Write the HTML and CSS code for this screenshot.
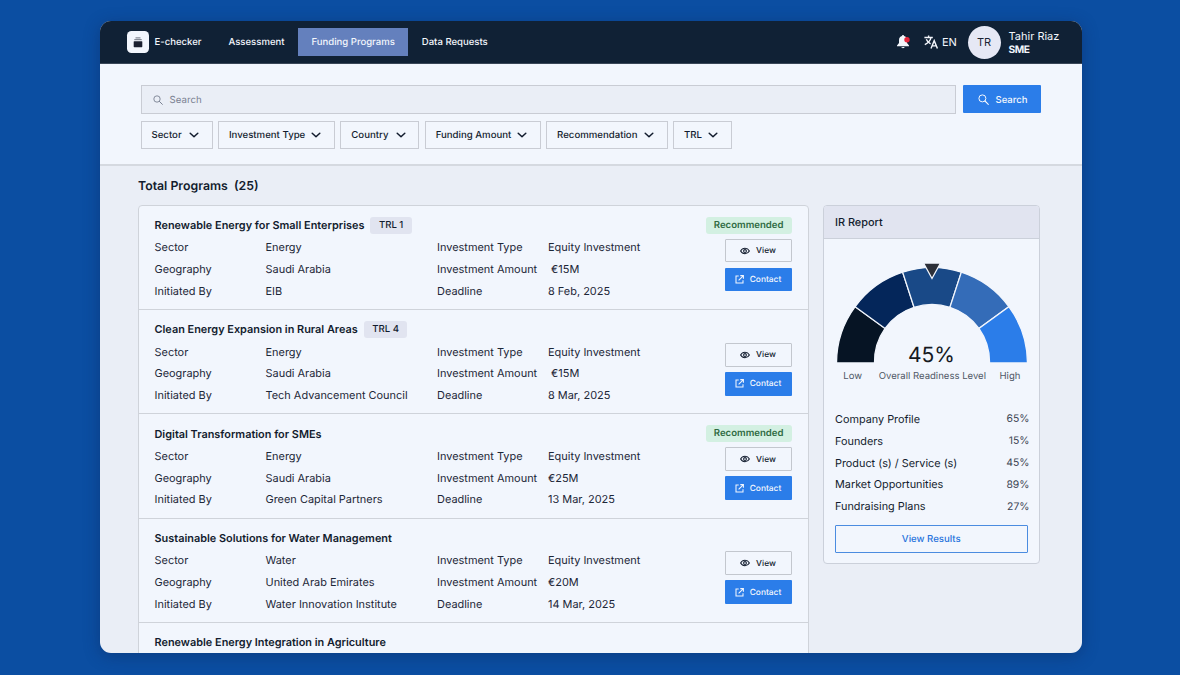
FILE: index.html
```
<!DOCTYPE html>
<html lang="en">
<head>
<meta charset="utf-8">
<title>E-checker – Funding Programs</title>
<link rel="stylesheet" href="styles.css">
</head>
<body>
<svg class="sprite" aria-hidden="true">
  <symbol id="chev" viewBox="0 0 10 6"><path d="M1.2 1.2 5 4.8 8.8 1.2" fill="none" stroke="currentColor" stroke-width="1.5" stroke-linecap="round" stroke-linejoin="round"/></symbol>
  <symbol id="mag" viewBox="0 0 11 11"><circle cx="4.4" cy="4.4" r="3.5" fill="none" stroke="currentColor"/><path d="M7 7l3.3 3.3" stroke="currentColor" stroke-width="1.1" stroke-linecap="round"/></symbol>
  <symbol id="eye" viewBox="0 0 10 8"><path d="M.6 4C2.6.4 7.4.4 9.4 4 7.4 7.6 2.6 7.6.6 4Z" fill="none" stroke="currentColor" stroke-width="1.05"/><circle cx="5" cy="4" r="1.4" fill="none" stroke="currentColor" stroke-width="1.05"/></symbol>
  <symbol id="ext" viewBox="0 0 9 9"><path d="M3.7 1H1v7h7V5.3M5.3.6h3.1v3.1M8.2.8 3.6 5.4" fill="none" stroke="currentColor" stroke-width="1.05"/></symbol>
</svg>
<div class="window">
  <header class="topbar">
    <div class="brand">
      <span class="logo"><svg width="10" height="11" viewBox="0 0 10 11"><path d="M2.500.9h5M1.300 2.700h7.400" stroke="#4a4f5e" stroke-width=".8"/><rect x=".7" y="4.200" width="8.600" height="6" rx=".6" fill="#1a2030"/></svg></span>
      <span>E-checker</span>
    </div>
    <nav class="nav">
      <a>Assessment</a><a class="active">Funding Programs</a><a>Data Requests</a>
    </nav>
    <div class="tools">
      <svg class="bell" width="14" height="14" viewBox="0 0 14 14"><path d="M6 0c.7 0 1 .5 1 1.1 2 .5 3 2 3 4v3L12 10.600V11.300H0V10.600L2 8.100v-3c0-2 1-3.500 3-4C5 .5 5.300 0 6 0Z" fill="#f3f6fc"/><path d="M4.400 12.100h3.200c-.3 1.600-2.900 1.600-3.200 0Z" fill="#f3f6fc"/><circle cx="10" cy="4.700" r="2.700" fill="#e5263c"/></svg>
      <svg class="lang" width="14" height="14" viewBox="0 0 14 14" fill="none" stroke="#f3f6fc" stroke-width="1.400"><path d="M.4 2.500h8.400M4.600.4v2M7 2.700C6.300 5.600 3.500 8.300.8 9.600M2.300 4.300C3 6.200 4.700 8 6.600 8.900M7 13.500 10.200 5.700 13.400 13.500M8.100 10.900h4.200"/></svg>
      <span class="en">EN</span>
      <span class="avatar">TR</span>
      <div class="user"><span>Tahir Riaz</span><b>SME</b></div>
    </div>
  </header>
  <section class="filters">
    <div class="searchrow">
      <div class="field"><svg width="10" height="10"><use href="#mag"/></svg><span>Search</span></div>
      <div class="searchbtn"><svg width="11" height="11"><use href="#mag"/></svg><span>Search</span></div>
    </div>
    <div class="chips">
      <div class="chip c1"><span>Sector</span><svg width="10" height="6"><use href="#chev"/></svg></div>
      <div class="chip c2"><span>Investment Type</span><svg width="10" height="6"><use href="#chev"/></svg></div>
      <div class="chip c3"><span>Country</span><svg width="10" height="6"><use href="#chev"/></svg></div>
      <div class="chip c4"><span>Funding Amount</span><svg width="10" height="6"><use href="#chev"/></svg></div>
      <div class="chip c5"><span>Recommendation</span><svg width="10" height="6"><use href="#chev"/></svg></div>
      <div class="chip c6"><span>TRL</span><svg width="10" height="6"><use href="#chev"/></svg></div>
    </div>
  </section>
  <main class="main">
    <h1>Total Programs&nbsp; (25)</h1>
    <div class="cols">
      <div class="list">
        <article class="item">
          <div class="info">
            <div class="title"><h2>Renewable Energy for Small Enterprises</h2><span class="trl">TRL 1</span></div>
            <div class="grid">
              <span>Sector</span><span>Energy</span><span>Investment Type</span><span>Equity Investment</span>
              <span>Geography</span><span>Saudi Arabia</span><span>Investment Amount</span><span class="inset">€15M</span>
              <span>Initiated By</span><span>EIB</span><span>Deadline</span><span>8 Feb, 2025</span>
            </div>
          </div>
          <div class="side"><span class="rec">Recommended</span><div class="btn"><svg width="10" height="8"><use href="#eye"/></svg><span>View</span></div><div class="btn blue"><svg width="9" height="9"><use href="#ext"/></svg><span>Contact</span></div></div>
        </article>
        <article class="item">
          <div class="info">
            <div class="title"><h2>Clean Energy Expansion in Rural Areas</h2><span class="trl">TRL 4</span></div>
            <div class="grid">
              <span>Sector</span><span>Energy</span><span>Investment Type</span><span>Equity Investment</span>
              <span>Geography</span><span>Saudi Arabia</span><span>Investment Amount</span><span class="inset">€15M</span>
              <span>Initiated By</span><span>Tech Advancement Council</span><span>Deadline</span><span>8 Mar, 2025</span>
            </div>
          </div>
          <div class="side"><div class="btn"><svg width="10" height="8"><use href="#eye"/></svg><span>View</span></div><div class="btn blue"><svg width="9" height="9"><use href="#ext"/></svg><span>Contact</span></div></div>
        </article>
        <article class="item">
          <div class="info">
            <div class="title"><h2>Digital Transformation for SMEs</h2></div>
            <div class="grid">
              <span>Sector</span><span>Energy</span><span>Investment Type</span><span>Equity Investment</span>
              <span>Geography</span><span>Saudi Arabia</span><span>Investment Amount</span><span>€25M</span>
              <span>Initiated By</span><span>Green Capital Partners</span><span>Deadline</span><span>13 Mar, 2025</span>
            </div>
          </div>
          <div class="side"><span class="rec">Recommended</span><div class="btn"><svg width="10" height="8"><use href="#eye"/></svg><span>View</span></div><div class="btn blue"><svg width="9" height="9"><use href="#ext"/></svg><span>Contact</span></div></div>
        </article>
        <article class="item">
          <div class="info">
            <div class="title"><h2>Sustainable Solutions for Water Management</h2></div>
            <div class="grid">
              <span>Sector</span><span>Water</span><span>Investment Type</span><span>Equity Investment</span>
              <span>Geography</span><span>United Arab Emirates</span><span>Investment Amount</span><span>€20M</span>
              <span>Initiated By</span><span>Water Innovation Institute</span><span>Deadline</span><span>14 Mar, 2025</span>
            </div>
          </div>
          <div class="side"><div class="btn"><svg width="10" height="8"><use href="#eye"/></svg><span>View</span></div><div class="btn blue"><svg width="9" height="9"><use href="#ext"/></svg><span>Contact</span></div></div>
        </article>
        <article class="item">
          <div class="info"><div class="title"><h2>Renewable Energy Integration in Agriculture</h2></div></div>
        </article>
      </div>
      <aside class="report">
        <div class="rhead">IR Report</div>
        <svg class="gauge" width="214" height="146" viewBox="824 238.500 214 146">
          <g stroke="#f2f6fd" stroke-width="1.300">
            <path d="M836.500 362.500A95.500 95.500 0 0 1 855.140 306.160L885.080 327.910A58 58 0 0 0 874.500 362.500Z" fill="#061424"/>
            <path d="M855.140 306.160A95 95 0 0 1 902.640 271.650L914.080 306.840A58 58 0 0 0 885.080 327.910Z" fill="#04265a"/>
            <path d="M902.640 271.650A95 95 0 0 1 961.360 271.650L949.920 306.840A58 58 0 0 0 914.080 306.840Z" fill="#194987"/>
            <path d="M961.360 271.650A95 95 0 0 1 1008.860 306.160L978.920 327.910A58 58 0 0 0 949.920 306.840Z" fill="#346cb8"/>
            <path d="M1008.860 306.160A95.500 95.500 0 0 1 1027.500 362.500H989.500A58 58 0 0 0 978.920 327.910Z" fill="#2b7de9"/>
            <path d="M923.500 262.500H940.500L932 278Z" fill="#2c2f38"/>
          </g>
          <text class="pct" x="931.500" y="361" text-anchor="middle">45%</text>
          <g class="glabels"><text x="843.300" y="378.500">Low</text><text x="878.700" y="378.500">Overall Readiness Level</text><text x="999.500" y="378.500">High</text></g>
        </svg>
        <div class="scores">
          <span>Company Profile</span><em>65%</em>
          <span>Founders</span><em>15%</em>
          <span>Product (s) / Service (s)</span><em>45%</em>
          <span>Market Opportunities</span><em>89%</em>
          <span>Fundraising Plans</span><em>27%</em>
        </div>
        <div class="results">View Results</div>
      </aside>
    </div>
  </main>
</div>
</body>
</html>
```
FILE: styles.css
```
* { box-sizing: border-box; }
body { margin: 0; width: 1180px; height: 675px; overflow: hidden; background: #0b4ea2; padding: 21px 98px 0 100px; font-family: Inter, "Liberation Sans", sans-serif; color: #121c2e; text-rendering: geometricPrecision; }
.sprite { position: absolute; width: 0; height: 0; }
svg { flex: none; }
.window { width: 982px; height: 632px; border-radius: 11px; overflow: hidden; background: #eaeef6; box-shadow: 0 3px 16px rgba(14, 40, 90, .45); }
.topbar { height: 43px; background: #102135; border-bottom: 1px solid #394657; color: #f3f6fc; display: flex; align-items: center; padding: 0 22px 0 27px; font-size: 9.550px; font-weight: 500; }
.brand { display: flex; align-items: center; gap: 5.500px; width: 88px; white-space: nowrap; }
.logo { width: 22px; height: 22px; border-radius: 4.500px; background: #f2f6fd; display: flex; align-items: center; justify-content: center; }
.nav { display: flex; align-items: center; }
.nav a { height: 28px; line-height: 28px; padding: 1px 13.500px 0; white-space: nowrap; }
.nav .active { background: #6480bd; }
.tools { margin-left: auto; display: flex; align-items: center; width: 163px; white-space: nowrap; }
.bell { margin-right: 13px; }
.lang { margin-right: 4px; }
.en { font-size: 11px; font-weight: 400; width: 25.500px; }
.avatar { width: 33px; height: 33px; border-radius: 50%; background: #e6e8f5; color: #1c2433; display: flex; align-items: center; justify-content: center; font-size: 11px; font-weight: 400; flex: none; }
.user { margin-left: 8px; padding-top: 1px; display: flex; flex-direction: column; font-size: 11px; line-height: 14px; font-weight: 400; }
.user b { font-size: 10.200px; font-weight: 700; letter-spacing: -.5px; }
.filters { height: 102px; background: #f2f6fd; border-bottom: 2px solid #d5d9e0; padding: 21px 41px 0 40.500px; }
.searchrow { display: flex; gap: 7px; }
.field { width: 815.500px; height: 29px; border: 1px solid #c9ccd4; background: #eaeef6; display: flex; align-items: center; gap: 7px; padding: 1px 0 0 11px; font-size: 9.700px; color: #7b8293; }
.searchbtn { width: 78px; height: 28px; background: #2b7de9; color: #f2f6fd; border-radius: 1px; display: flex; align-items: center; gap: 7px; padding: 1px 0 0 14.500px; font-size: 9.550px; font-weight: 500; }
.searchbtn span, .field span { padding-top: 1px; }
.chips { display: flex; gap: 5.400px; margin-top: 7px; }
.chip { height: 28px; border: 1px solid #c9ccd4; display: flex; align-items: center; justify-content: space-between; padding: 0 12.500px 0 10px; font-size: 9.650px; font-weight: 500; white-space: nowrap; }
.chip span { padding-top: 1px; }
.c1 { width: 72px; } .c2 { width: 117px; } .c3 { width: 79px; } .c4 { width: 116px; } .c5 { width: 121.500px; } .c6 { width: 59px; }
.main { padding: 12px 42px 0 37.500px; }
h1 { margin: 0; font-size: 12.300px; line-height: 16px; font-weight: 600; padding-left: .5px; }
.cols { display: flex; gap: 14.500px; margin-top: 11px; align-items: flex-start; }
.list { width: 671px; border: 1px solid #cfd3da; border-radius: 4px 4px 0 0; background: #f2f6fd; }
.item { height: 104.200px; border-bottom: 1px solid #cfd3da; display: flex; justify-content: space-between; padding: 0 16px; }
.info { padding-top: 9.200px; }
.title { height: 20px; display: flex; align-items: center; gap: 6px; }
h2 { margin: 0; font-size: 10.900px; font-weight: 600; white-space: nowrap; }
.trl { height: 17px; line-height: 18px; border-radius: 3px; background: #e1e4f0; padding: 0 8.500px; font-size: 9.600px; font-weight: 500; }
.grid { display: grid; grid-template-columns: 111px 171.500px 111px 110px; grid-auto-rows: 21.900px; align-items: center; margin-top: 1.200px; font-size: 10.950px; white-space: nowrap; color: #1d2738; }
.inset { padding-left: 3px; }
.side { padding: 11px 0 17.800px; display: flex; flex-direction: column; align-items: flex-end; justify-content: flex-end; width: 90px; }
.rec { height: 17px; line-height: 18px; border-radius: 3px; background: #d3f0e2; color: #2f6b42; font-size: 9.600px; font-weight: 600; padding: 0 8px; margin-bottom: 5px; }
.btn { width: 67px; height: 23.500px; flex: none; border: 1px solid #c3c7ce; border-radius: 1px; display: flex; align-items: center; justify-content: center; gap: 6px; font-size: 8.400px; font-weight: 500; }
.btn span { padding-top: 1px; }
.blue { background: #2b7de9; border: 0; color: #f2f6fd; margin-top: 5.500px; }
.report { width: 216.500px; height: 359px; border: 1px solid #cbd0da; border-radius: 4px; background: #f2f6fd; overflow: hidden; }
.rhead { height: 32.500px; line-height: 33px; background: #e1e4f0; border-bottom: 1px solid #cbd0da; padding-left: 11px; font-size: 10.900px; font-weight: 500; }
.gauge { display: block; }
.pct { font-size: 21px; fill: #15191f; }
.glabels { font-size: 9.550px; fill: #505866; }
.scores { display: grid; grid-template-columns: 1fr auto; grid-auto-rows: 21.850px; align-items: center; padding: 23.500px 9px 0 11px; font-size: 10.850px; white-space: nowrap; }
.scores em { font-style: normal; font-size: 10.400px; color: #3d4554; text-align: right; }
.results { margin: 7.500px 11px 0; height: 28px; border: 1px solid #4b8ce0; border-radius: 1px; display: flex; align-items: center; justify-content: center; color: #2673dc; font-size: 9.600px; font-weight: 500; padding-top: 1px; }
```
